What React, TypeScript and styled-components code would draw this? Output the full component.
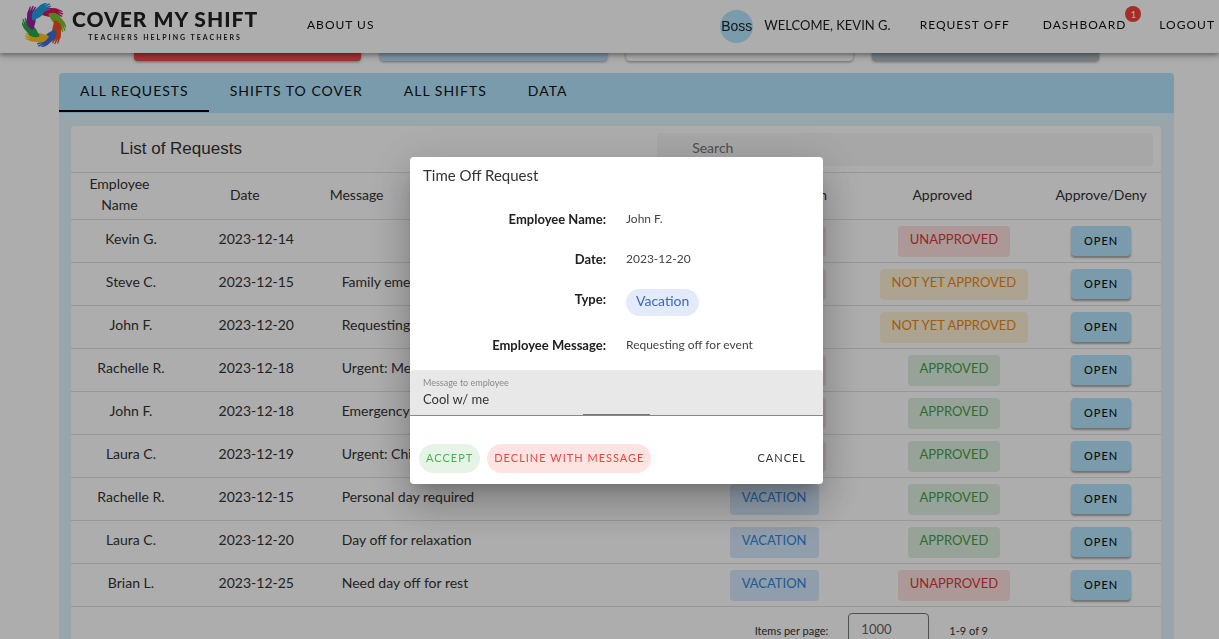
import React from 'react';
import styled, { createGlobalStyle } from 'styled-components';

const GlobalStyle = createGlobalStyle`
  * { box-sizing: border-box; }
  html, body { margin: 0; height: 100%; overflow: hidden; }
  body { background: #fff; color: #212121; font: 14px/22px Lato, "Liberation Sans", sans-serif; }
  button, input, select, textarea { font-family: inherit; color: inherit; }
`;

const Header = styled.header`
  position: fixed;
  top: 0;
  left: 0;
  right: 0;
  z-index: 1;
  height: 53px;
  display: flex;
  align-items: center;
  padding: 0 4px 4px 22px;
  background: #fff;
  box-shadow: 0 2px 4px rgba(0, 0, 0, 0.3), 0 4px 8px rgba(0, 0, 0, 0.16);
`;

const Brand = styled.a`
  display: flex;
  align-items: center;
  gap: 6px;
  width: 285px;
  color: #212121;
  text-decoration: none;
`;

const BrandText = styled.span`
  display: flex;
  flex-direction: column;
  align-items: center;
  padding-top: 2px;
`;

const BrandName = styled.span`
  font-size: 21px;
  line-height: 22px;
  font-weight: 900;
  letter-spacing: 1px;
`;

const BrandTag = styled.span`
  font-size: 7px;
  line-height: 14px;
  font-weight: 700;
  letter-spacing: 2px;
`;

const Spacer = styled.div`
  flex: 1;
`;

const NavLink = styled.a`
  position: relative;
  color: #111;
  font-size: 12px;
  letter-spacing: 1px;
  text-decoration: none;
`;

const Nav = styled.nav`
  display: flex;
  align-items: center;
  gap: 33px;
`;

const UserChip = styled.div`
  display: flex;
  align-items: center;
  gap: 11px;
  margin-right: 29px;
  font-size: 13px;
`;

const Avatar = styled.span`
  width: 33px;
  height: 33px;
  margin-top: 4px;
  border-radius: 50%;
  background: #b3e5fc;
  font: 14px/33px "Liberation Sans", sans-serif;
  text-align: center;
`;

const Badge = styled.span`
  position: absolute;
  top: -8px;
  right: -15px;
  width: 16px;
  height: 16px;
  border-radius: 50%;
  background: #f44336;
  color: #fff;
  font-size: 10px;
  line-height: 16px;
  letter-spacing: 0;
  text-align: center;
`;

const Main = styled.main`
  padding: 0 45px 0 59px;
`;

const Summary = styled.div`
  display: grid;
  grid-template-columns: repeat(4, 1fr);
  gap: 19px;
  padding: 0 75px 12px;
`;

const SummaryCard = styled.div<{ $bg: string }>`
  height: 61px;
  border-radius: 4px;
  background: ${p => p.$bg};
  box-shadow: 0 1px 3px rgba(0, 0, 0, 0.4);
`;

const Tabs = styled.div`
  display: flex;
  height: 40px;
  border-radius: 4px 4px 0 0;
  background: #b3e5fc;
`;

const Tab = styled.button<{ $active?: boolean }>`
  height: 39px;
  padding: 0 20px 2px 21px;
  border: 0;
  border-bottom: 2px solid ${p => (p.$active ? '#000' : 'transparent')};
  background: none;
  color: #111;
  font-size: 14px;
  letter-spacing: 1px;
`;

const Panel = styled.section`
  padding: 13px 13px 14px 12px;
  background: #e1f5fe;
`;

const Sheet = styled.div`
  border-radius: 4px;
  background: #fff;
  color: #333;
`;

const Toolbar = styled.div`
  display: flex;
  align-items: center;
  justify-content: space-between;
  height: 46px;
  padding: 0 8px 0 49px;
`;

const Title = styled.h1`
  margin: 0;
  font: 17px/24px "Liberation Sans", sans-serif;
`;

const Search = styled.input`
  width: 48%;
  height: 33px;
  padding: 0 35px 4px;
  border: 0;
  border-radius: 4px;
  background: #f6f6f6;
  font-size: 14px;
  &::placeholder { color: #777; opacity: 1; }
`;

const Table = styled.table`
  width: 100%;
  border-collapse: collapse;
  table-layout: fixed;
`;

const Th = styled.th<{ $sort?: boolean; $left?: boolean }>`
  height: 47px;
  padding: 0 ${p => (p.$sort ? 23 : 0)}px 4px ${p => (p.$left ? 8 : 0)}px;
  border-top: 1px solid #e0e0e0;
  border-bottom: 1px solid #e0e0e0;
  font-size: 14px;
  line-height: 21px;
  font-weight: 400;
  text-align: ${p => (p.$left ? 'left' : 'center')};
`;

const Td = styled.td<{ $left?: boolean; $control?: boolean }>`
  height: 43px;
  padding: 0 0 ${p => (p.$control ? 0 : 4)}px ${p => (p.$left ? 20 : 0)}px;
  border-bottom: 1px solid #e0e0e0;
  font-size: 14px;
  line-height: 18px;
  text-align: ${p => (p.$left ? 'left' : 'center')};
`;

const tones = {
  red: ['#fde0df', '#d93a3a'],
  orange: ['#fff0d6', '#ec8a14'],
  green: ['#dff0e0', '#45a049'],
  blue: ['#d5e8fb', '#2f86dc'],
};
type Tone = keyof typeof tones;

const Pill = styled.span<{ $tone: Tone }>`
  display: inline-block;
  padding: 0 12px 4px;
  border-radius: 4px;
  background: ${p => tones[p.$tone][0]};
  color: ${p => tones[p.$tone][1]};
  font-size: 13px;
  line-height: 27px;
  vertical-align: middle;
`;

const OpenButton = styled.button`
  width: 60px;
  height: 30px;
  padding: 0 0 2px;
  border: 0;
  border-radius: 4px;
  background: #b3e5fc;
  box-shadow: 0 2px 2px rgba(0, 0, 0, 0.35);
  color: #111;
  font-size: 11px;
  font-weight: 500;
  letter-spacing: 1px;
  vertical-align: middle;
`;

const Pager = styled.div`
  display: flex;
  align-items: center;
  gap: 20px;
  padding: 6px 173px 5px 0;
  justify-content: flex-end;
  font-size: 11px;
`;

const PagerLabel = styled.label`
  display: flex;
  align-items: center;
  gap: 20px;
`;

const PagerSelect = styled.select`
  width: 81px;
  height: 36px;
  padding: 0 12px 4px;
  border: 1px solid #777;
  border-radius: 4px;
  background: none;
  appearance: none;
  color: #666;
  font-size: 13px;
`;

const Scrim = styled.div`
  position: fixed;
  inset: 0;
  z-index: 2;
  display: flex;
  align-items: center;
  justify-content: center;
  padding: 2px 0 0 14px;
  background: rgba(0, 0, 0, 0.32);
`;

const Dialog = styled.form`
  width: 413px;
  max-width: 100%;
  border-radius: 4px;
  background: #fff;
  box-shadow: 0 11px 15px -7px rgba(0, 0, 0, 0.2), 0 24px 38px 3px rgba(0, 0, 0, 0.14), 0 9px 46px 8px rgba(0, 0, 0, 0.12);
`;

const DialogTitle = styled.h2`
  margin: 0;
  padding: 6px 13px 21px;
  font-size: 15px;
  line-height: 24px;
  font-weight: 400;
  color: #333;
`;

const Details = styled.dl`
  display: grid;
  grid-template-columns: 196px 1fr;
  gap: 18px 20px;
  margin: 0;
  padding-bottom: 14px;
  font-size: 12px;
`;

const Term = styled.dt`
  font-size: 13px;
  font-weight: 700;
  text-align: right;
`;

const Value = styled.dd`
  margin: 0;
  color: #444;
`;

const TypeChip = styled.span`
  display: block;
  width: fit-content;
  margin-top: 1px;
  padding: 0 10px 3px;
  border-radius: 14px;
  background: #e3ebfa;
  color: #3f68b5;
  font-size: 14px;
  line-height: 24px;
`;

const Field = styled.label`
  display: block;
  height: 46px;
  padding: 6px 13px 0;
  border-bottom: 1px solid #888;
  border-radius: 4px 4px 0 0;
  background: linear-gradient(#777, #777) center bottom / 67px 1px no-repeat #e8e8e8;
  color: #8a8a8a;
  font-size: 9px;
  line-height: 13px;
`;

const FieldInput = styled.input`
  display: block;
  width: 100%;
  height: 20px;
  padding: 0;
  border: 0;
  outline: 0;
  background: none;
  color: #333;
  font-size: 13px;
`;

const Actions = styled.div`
  display: flex;
  gap: 7px;
  padding: 28px 10px 11px 9px;
`;

const Action = styled.button<{ $bg?: string; $fg: string }>`
  height: 29px;
  padding: 0 7px 2px;
  border: 0;
  border-radius: 15px;
  background: ${p => p.$bg || 'transparent'};
  color: ${p => p.$fg};
  font-size: 11px;
  letter-spacing: 1px;
`;

const handColors = ['#e0115f', '#7cc22b', '#f04e23', '#3f6fd8', '#ffc814', '#2aa84a', '#9c1fa0', '#1f9fe0'];

const Logo = () => (
  <svg width="44" height="44" viewBox="-22 -22 44 44" aria-hidden="true">
    {handColors.map((color, i) => (
      <path
        key={color}
        transform={`rotate(${30 + i * 45})`}
        fill={color}
        d="M-10-8C-10-14-7-17-3-18L2-20.500 9-21.500 9.500-20.500 5-19 11-19.500 11.300-18.300 6-17.300 11.500-17 11.500-15.800 6-15.500 10-14.300 9.600-13.200 4-13C1-9.500-2-8.500-5-8-7-7.500-9-6-10-8Z"
      />
    ))}
    <circle r="8" fill="#fff" />
  </svg>
);

type Row = { name: string; date: string; message: string; reason: string; status: string };

const rows: Row[] = [
  { name: 'Kevin G.', date: '2023-12-14', message: '', reason: 'EMERGENCY', status: 'UNAPPROVED' },
  { name: 'Steve C.', date: '2023-12-15', message: 'Family emergency', reason: 'EMERGENCY', status: 'NOT YET APPROVED' },
  { name: 'John F.', date: '2023-12-20', message: 'Requesting off for event', reason: 'VACATION', status: 'NOT YET APPROVED' },
  { name: 'Rachelle R.', date: '2023-12-18', message: 'Urgent: Medical', reason: 'EMERGENCY', status: 'APPROVED' },
  { name: 'John F.', date: '2023-12-18', message: 'Emergency', reason: 'EMERGENCY', status: 'APPROVED' },
  { name: 'Laura C.', date: '2023-12-19', message: 'Urgent: Childcare', reason: 'EMERGENCY', status: 'APPROVED' },
  { name: 'Rachelle R.', date: '2023-12-15', message: 'Personal day required', reason: 'VACATION', status: 'APPROVED' },
  { name: 'Laura C.', date: '2023-12-20', message: 'Day off for relaxation', reason: 'VACATION', status: 'APPROVED' },
  { name: 'Brian L.', date: '2023-12-25', message: 'Need day off for rest', reason: 'VACATION', status: 'UNAPPROVED' },
];

const toneOf: Record<string, Tone> = {
  EMERGENCY: 'red',
  UNAPPROVED: 'red',
  'NOT YET APPROVED': 'orange',
  APPROVED: 'green',
  VACATION: 'blue',
};

export default function App() {
  return (
    <>
      <GlobalStyle />
      <Header>
        <Brand href="#">
          <Logo />
          <BrandText>
            <BrandName>COVER MY SHIFT</BrandName>
            <BrandTag>TEACHERS HELPING TEACHERS</BrandTag>
          </BrandText>
        </Brand>
        <NavLink href="#about">ABOUT US</NavLink>
        <Spacer />
        <UserChip>
          <Avatar>Boss</Avatar>
          WELCOME, KEVIN G.
        </UserChip>
        <Nav>
          <NavLink href="#request">REQUEST OFF</NavLink>
          <NavLink href="#dashboard">
            DASHBOARD
            <Badge>1</Badge>
          </NavLink>
          <NavLink href="#logout">LOGOUT</NavLink>
        </Nav>
      </Header>
      <Main>
        <Summary>
          <SummaryCard $bg="#f44d4d" />
          <SummaryCard $bg="#bbdefb" />
          <SummaryCard $bg="#ffffff" />
          <SummaryCard $bg="#b0bec5" />
        </Summary>
        <Tabs role="tablist">
          <Tab role="tab" aria-selected $active>ALL REQUESTS</Tab>
          <Tab role="tab">SHIFTS TO COVER</Tab>
          <Tab role="tab">ALL SHIFTS</Tab>
          <Tab role="tab">DATA</Tab>
        </Tabs>
        <Panel>
          <Sheet>
            <Toolbar>
              <Title>List of Requests</Title>
              <Search placeholder="Search" aria-label="Search" />
            </Toolbar>
            <Table>
              <colgroup>
                <col style={{ width: '11%' }} />
                <col style={{ width: '12%' }} />
                <col />
                <col style={{ width: '17%' }} />
                <col style={{ width: '16%' }} />
                <col style={{ width: '11%' }} />
              </colgroup>
              <thead>
                <tr>
                  <Th $sort>Employee Name</Th>
                  <Th $sort>Date</Th>
                  <Th $sort $left>Message</Th>
                  <Th $sort>Time Off Description</Th>
                  <Th $sort>Approved</Th>
                  <Th>Approve/Deny</Th>
                </tr>
              </thead>
              <tbody>
                {rows.map((r, i) => (
                  <tr key={i}>
                    <Td>{r.name}</Td>
                    <Td>{r.date}</Td>
                    <Td $left>{r.message}</Td>
                    <Td $control><Pill $tone={toneOf[r.reason]}>{r.reason}</Pill></Td>
                    <Td $control><Pill $tone={toneOf[r.status]}>{r.status}</Pill></Td>
                    <Td $control><OpenButton>OPEN</OpenButton></Td>
                  </tr>
                ))}
              </tbody>
            </Table>
            <Pager>
              <PagerLabel>
                Items per page:
                <PagerSelect defaultValue="1000"><option>1000</option></PagerSelect>
              </PagerLabel>
              <span>1-9 of 9</span>
            </Pager>
          </Sheet>
        </Panel>
      </Main>
      <Scrim>
        <Dialog role="dialog" aria-labelledby="dialog-title">
          <DialogTitle id="dialog-title">Time Off Request</DialogTitle>
          <Details>
            <Term>Employee Name:</Term>
            <Value>John F.</Value>
            <Term>Date:</Term>
            <Value>2023-12-20</Value>
            <Term>Type:</Term>
            <Value><TypeChip>Vacation</TypeChip></Value>
            <Term>Employee Message:</Term>
            <Value>Requesting off for event</Value>
          </Details>
          <Field>
            Message to employee
            <FieldInput defaultValue="Cool w/ me" />
          </Field>
          <Actions>
            <Action type="button" $bg="#e6f4e7" $fg="#4caf50">ACCEPT</Action>
            <Action type="button" $bg="#fde4e3" $fg="#e8483f">DECLINE WITH MESSAGE</Action>
            <Spacer />
            <Action type="button" $fg="#333">CANCEL</Action>
          </Actions>
        </Dialog>
      </Scrim>
    </>
  );
}
